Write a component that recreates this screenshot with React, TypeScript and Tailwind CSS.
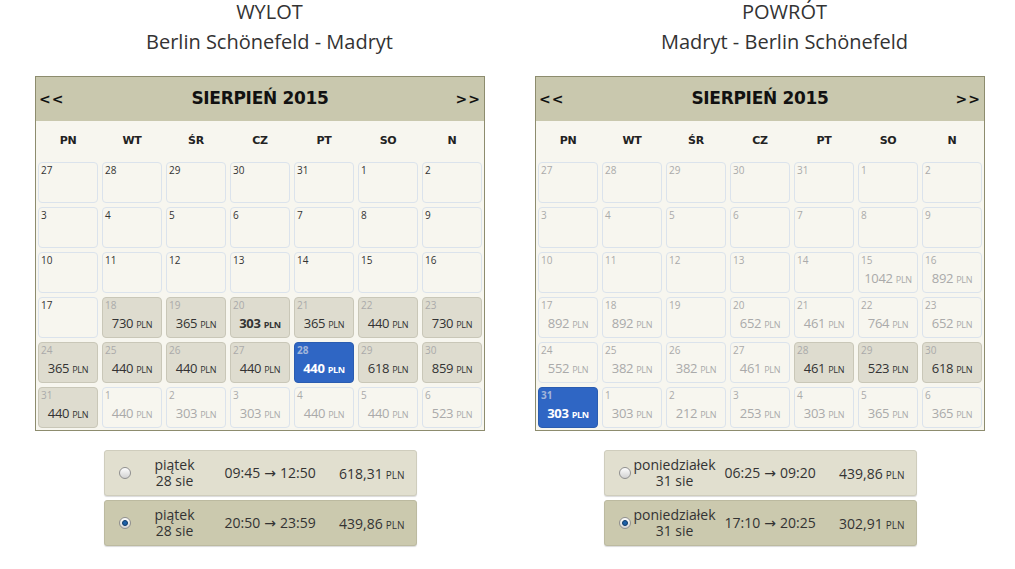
import React from 'react'

type Kind = 'plain' | 'muted' | 'avail' | 'sel'
type Cell = { d: number; p?: number; k: Kind; b?: boolean }

const mk = (row: (string | number)[]): Cell[] =>
  row.map((v) => {
    if (typeof v === 'number') return { d: v, k: 'plain' }
    const [d, p, k, b] = v.split(':')
    return { d: +d, p: p ? +p : undefined, k: (k as Kind) || 'plain', b: b === 'b' }
  })

const outbound: Cell[][] = [
  mk([27, 28, 29, 30, 31, 1, 2]),
  mk([3, 4, 5, 6, 7, 8, 9]),
  mk([10, 11, 12, 13, 14, 15, 16]),
  mk([17, '18:730:avail', '19:365:avail', '20:303:avail:b', '21:365:avail', '22:440:avail', '23:730:avail']),
  mk(['24:365:avail', '25:440:avail', '26:440:avail', '27:440:avail', '28:440:sel', '29:618:avail', '30:859:avail']),
  mk(['31:440:avail', '1:440:muted', '2:303:muted', '3:303:muted', '4:440:muted', '5:440:muted', '6:523:muted']),
]

const inbound: Cell[][] = [
  mk(['27::muted', '28::muted', '29::muted', '30::muted', '31::muted', '1::muted', '2::muted']),
  mk(['3::muted', '4::muted', '5::muted', '6::muted', '7::muted', '8::muted', '9::muted']),
  mk(['10::muted', '11::muted', '12::muted', '13::muted', '14::muted', '15:1042:muted', '16:892:muted']),
  mk(['17:892:muted', '18:892:muted', '19::muted', '20:652:muted', '21:461:muted', '22:764:muted', '23:652:muted']),
  mk(['24:552:muted', '25:382:muted', '26:382:muted', '27:461:muted', '28:461:avail', '29:523:avail', '30:618:avail']),
  mk(['31:303:sel', '1:303:muted', '2:212:muted', '3:253:muted', '4:303:muted', '5:365:muted', '6:365:muted']),
]

const days = ['PN', 'WT', 'ŚR', 'CZ', 'PT', 'SO', 'N']

const DayCell = ({ c }: { c: Cell }) => {
  const box =
    c.k === 'sel'
      ? 'bg-[#2f66c4] border-[#2a5cb0]'
      : c.k === 'avail'
        ? 'bg-[#dedccf] border-[#c9c7b8]'
        : 'bg-[#f7f6ef] border-[#dbe3ec]'
  const num =
    c.k === 'sel'
      ? 'text-[#a3b6da] font-bold'
      : c.k === 'plain'
        ? 'text-[#333]'
        : 'text-[#aaa]'
  const price =
    c.k === 'sel' ? 'text-white font-bold' : c.k === 'avail' ? 'text-[#333]' : 'text-[#aaa]'
  return (
    <div className={`relative h-[41px] rounded-[4px] border ${box}`}>
      <div className={`absolute left-[2px] top-[1px] text-[10px] leading-[12px] ${num}`}>{c.d}</div>
      {c.p !== undefined && (
        <div
          className={`absolute inset-x-0 top-[16px] text-center leading-[16px] tracking-[-0.3px] ${price} ${c.b ? 'font-bold' : ''}`}
        >
          <span className="text-[13px]">{c.p}</span>
          <span className="text-[9px] ml-[3px]">PLN</span>
        </div>
      )}
    </div>
  )
}

const Calendar = ({ rows }: { rows: Cell[][] }) => (
  <div className="w-[450px] border border-[#8d8c6e] bg-[#f7f6ef]">
    <div className="h-[44px] bg-[#c9c8ae] flex items-center justify-between px-[3px] font-['DejaVu_Sans',sans-serif] font-bold text-[#111]">
      <span className="text-[14px] tracking-[1px]">&lt;&lt;</span>
      <span className="text-[17px] tracking-[-0.3px]">SIERPIEŃ 2015</span>
      <span className="text-[14px] tracking-[1px]">&gt;&gt;</span>
    </div>
    <div className="grid grid-cols-7 gap-x-[4px] px-[2px] h-[41px] items-center font-['DejaVu_Sans',sans-serif] font-bold text-[11px] text-[#222]">
      {days.map((d) => (
        <div key={d} className="text-center tracking-[-0.3px]">
          {d}
        </div>
      ))}
    </div>
    <div className="grid grid-cols-7 gap-[4px] px-[2px] pb-[2px]">
      {rows.flat().map((c, i) => (
        <DayCell key={i} c={c} />
      ))}
    </div>
  </div>
)

const Radio = ({ on }: { on: boolean }) => (
  <div className="w-[12px] h-[12px] rounded-full border border-[#8f8f8f] bg-gradient-to-b from-[#fdfdfd] to-[#d2d2d2] flex items-center justify-center shrink-0">
    {on && <div className="w-[6px] h-[6px] rounded-full bg-[#1c5fa8] border border-[#0d3a6a]" />}
  </div>
)

type Flight = { day: string; date: string; dep: string; arr: string; price: string; on: boolean }

const Option = ({ f }: { f: Flight }) => (
  <div
    className={`h-[46px] w-[313px] rounded-[3px] border flex items-center text-[14px] text-[#333] shadow-[0_1px_1px_rgba(0,0,0,0.15)] ${
      f.on ? 'bg-[#cbc9ae] border-[#bcbaa0]' : 'bg-[#e1dfcf] border-[#cfcdbd]'
    }`}
  >
    <div className="ml-[14px]">
      <Radio on={f.on} />
    </div>
    <div className="w-[88px] text-center leading-[16px]">
      {f.day}
      <br />
      {f.date}
    </div>
    <div className="ml-[6px] whitespace-nowrap">
      {f.dep}
      <span className="font-['DejaVu_Sans',sans-serif] text-[14px] mx-[4px]">→</span>
      {f.arr}
    </div>
    <div className="ml-auto mr-[11px] whitespace-nowrap">
      {f.price}
      <span className="text-[10px] ml-[3px]">PLN</span>
    </div>
  </div>
)

const Column = ({
  label,
  route,
  rows,
  flights,
  shift,
}: {
  label: string
  route: string
  rows: Cell[][]
  flights: Flight[]
  shift: string
}) => (
  <div className="w-[500px] flex flex-col items-center">
    <div className={`-mt-[3px] text-center text-[20px] leading-[30px] text-[#333] ${shift}`}>
      <div>{label}</div>
      <div>{route}</div>
    </div>
    <div className="mt-[19px]">
      <Calendar rows={rows} />
    </div>
    <div className="mt-[19px] flex flex-col gap-[4px]">
      {flights.map((f, i) => (
        <Option key={i} f={f} />
      ))}
    </div>
  </div>
)

export default function App() {
  return (
    <div className="w-[1015px] h-[569px] bg-white flex pl-[10px] font-['Open_Sans',sans-serif]">
      <Column
        label="WYLOT"
        route="Berlin Schönefeld - Madryt"
        shift="ml-[19px]"
        rows={outbound}
        flights={[
          { day: 'piątek', date: '28 sie', dep: '09:45', arr: '12:50', price: '618,31', on: false },
          { day: 'piątek', date: '28 sie', dep: '20:50', arr: '23:59', price: '439,86', on: true },
        ]}
      />
      <Column
        label="POWRÓT"
        route="Madryt - Berlin Schönefeld"
        shift="ml-[49px]"
        rows={inbound}
        flights={[
          { day: 'poniedziałek', date: '31 sie', dep: '06:25', arr: '09:20', price: '439,86', on: false },
          { day: 'poniedziałek', date: '31 sie', dep: '17:10', arr: '20:25', price: '302,91', on: true },
        ]}
      />
    </div>
  )
}
